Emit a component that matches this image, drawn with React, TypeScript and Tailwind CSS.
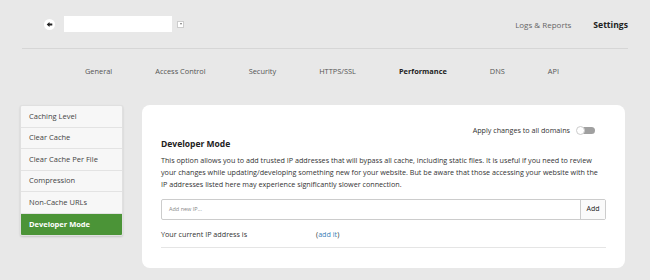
import React from "react";

const font = { fontFamily: '"Open Sans", "Liberation Sans", sans-serif' };

export default function App() {
  const side = ["Caching Level", "Clear Cache", "Clear Cache Per File", "Compression", "Non-Cache URLs"];
  const tabs = ["General", "Access Control", "Security", "HTTPS/SSL", "Performance", "DNS", "API"];
  return (
    <div className="w-[650px] h-[280px] bg-[#e8e8e8] overflow-hidden text-[#333]" style={font}>
      {/* top bar */}
      <div className="mx-[22px] h-[49px] border-b border-[#d6d6d6] flex items-center">
        <div className="ml-[22px] w-[11px] h-[11px] rounded-full bg-white flex items-center justify-center">
          <svg width="7" height="7" viewBox="0 0 10 10">
            <path d="M1 5 L5 1.5 L5 3.7 L9 3.7 L9 6.3 L5 6.3 L5 8.5 Z" fill="#222" />
          </svg>
        </div>
        <div className="ml-[9px] w-[108px] h-[16px] bg-white" />
        <div className="ml-[5px] w-[7px] h-[7px] bg-white border border-[#ccc] flex items-center justify-center">
          <div className="w-0 h-0 border-l-[1.5px] border-r-[1.5px] border-t-[2px] border-l-transparent border-r-transparent border-t-[#777]" />
        </div>
        <div className="ml-auto flex items-center gap-[22px] pt-[2px]">
          <span className="text-[#666] text-[8px]">Logs &amp; Reports</span>
          <span className="font-bold text-[#222] text-[8.6px]">Settings</span>
        </div>
      </div>
      {/* tabs */}
      <div className="h-[46px] flex items-center pl-[85px] text-[7.4px] text-[#555]">
        <div className="flex gap-[43px]">
          {tabs.map((t) => (
            <span key={t} className={t === "Performance" ? "font-bold text-[#222]" : ""}>{t}</span>
          ))}
        </div>
      </div>
      {/* body */}
      <div className="flex pl-[20px] pr-[25px] pt-[10px] gap-[19px] items-start">
        <div className="w-[103px] rounded-[2px] overflow-hidden bg-[#f7f7f7] border border-[#e0e0e0] shadow-[0_1px_2px_rgba(0,0,0,0.15)] text-[7.5px] text-[#444] flex flex-col shrink-0">
          {side.map((s) => (
            <div key={s} className="h-[21.5px] flex items-center pl-[8px] border-b border-[#e3e3e3]">{s}</div>
          ))}
          <div className="h-[21.5px] flex items-center pl-[8px] bg-[#4b9437] text-white font-bold">Developer Mode</div>
        </div>
        <div className="flex-1 bg-white rounded-[8px] px-[19px] pt-[20px] pb-[20px]">
          <div className="flex justify-end items-center gap-[7px] text-[7.2px] pr-[11px]">
            <span>Apply changes to all domains</span>
            <div className="w-[18px] h-[7px] rounded-full bg-[#a0a0a0] relative">
              <div className="absolute left-[-1px] top-[-1px] w-[9px] h-[9px] rounded-full bg-white border border-[#ccc]" />
            </div>
          </div>
          <div className="font-bold text-[8.5px] text-[#222] mt-[2px]">Developer Mode</div>
          <p className="text-[7.2px] leading-[12px] mt-[3px] text-[#333]">
            This option allows you to add trusted IP addresses that will bypass all cache, including static files. It is useful if you need to review your changes while updating/developing something new for your website. But be aware that those accessing your website with the IP addresses listed here may experience significantly slower connection.
          </p>
          <div className="mt-[9px] flex h-[21px] border border-[#ccc] rounded-[2px]">
            <div className="flex-1 flex items-center pl-[7px] text-[5.5px] text-[#888]">Add new IP...</div>
            <div className="w-[25px] border-l border-[#ccc] bg-[#fafafa] flex items-center justify-center text-[7px] text-[#222]">Add</div>
          </div>
          <div className="flex text-[7.2px] mt-[9px] pb-[8px] border-b border-[#e5e5e5]">
            <span className="w-[155px]">Your current IP address is</span>
            <span>(<span className="text-[#3a7fb8]">add it</span>)</span>
          </div>
        </div>
      </div>
    </div>
  );
}
